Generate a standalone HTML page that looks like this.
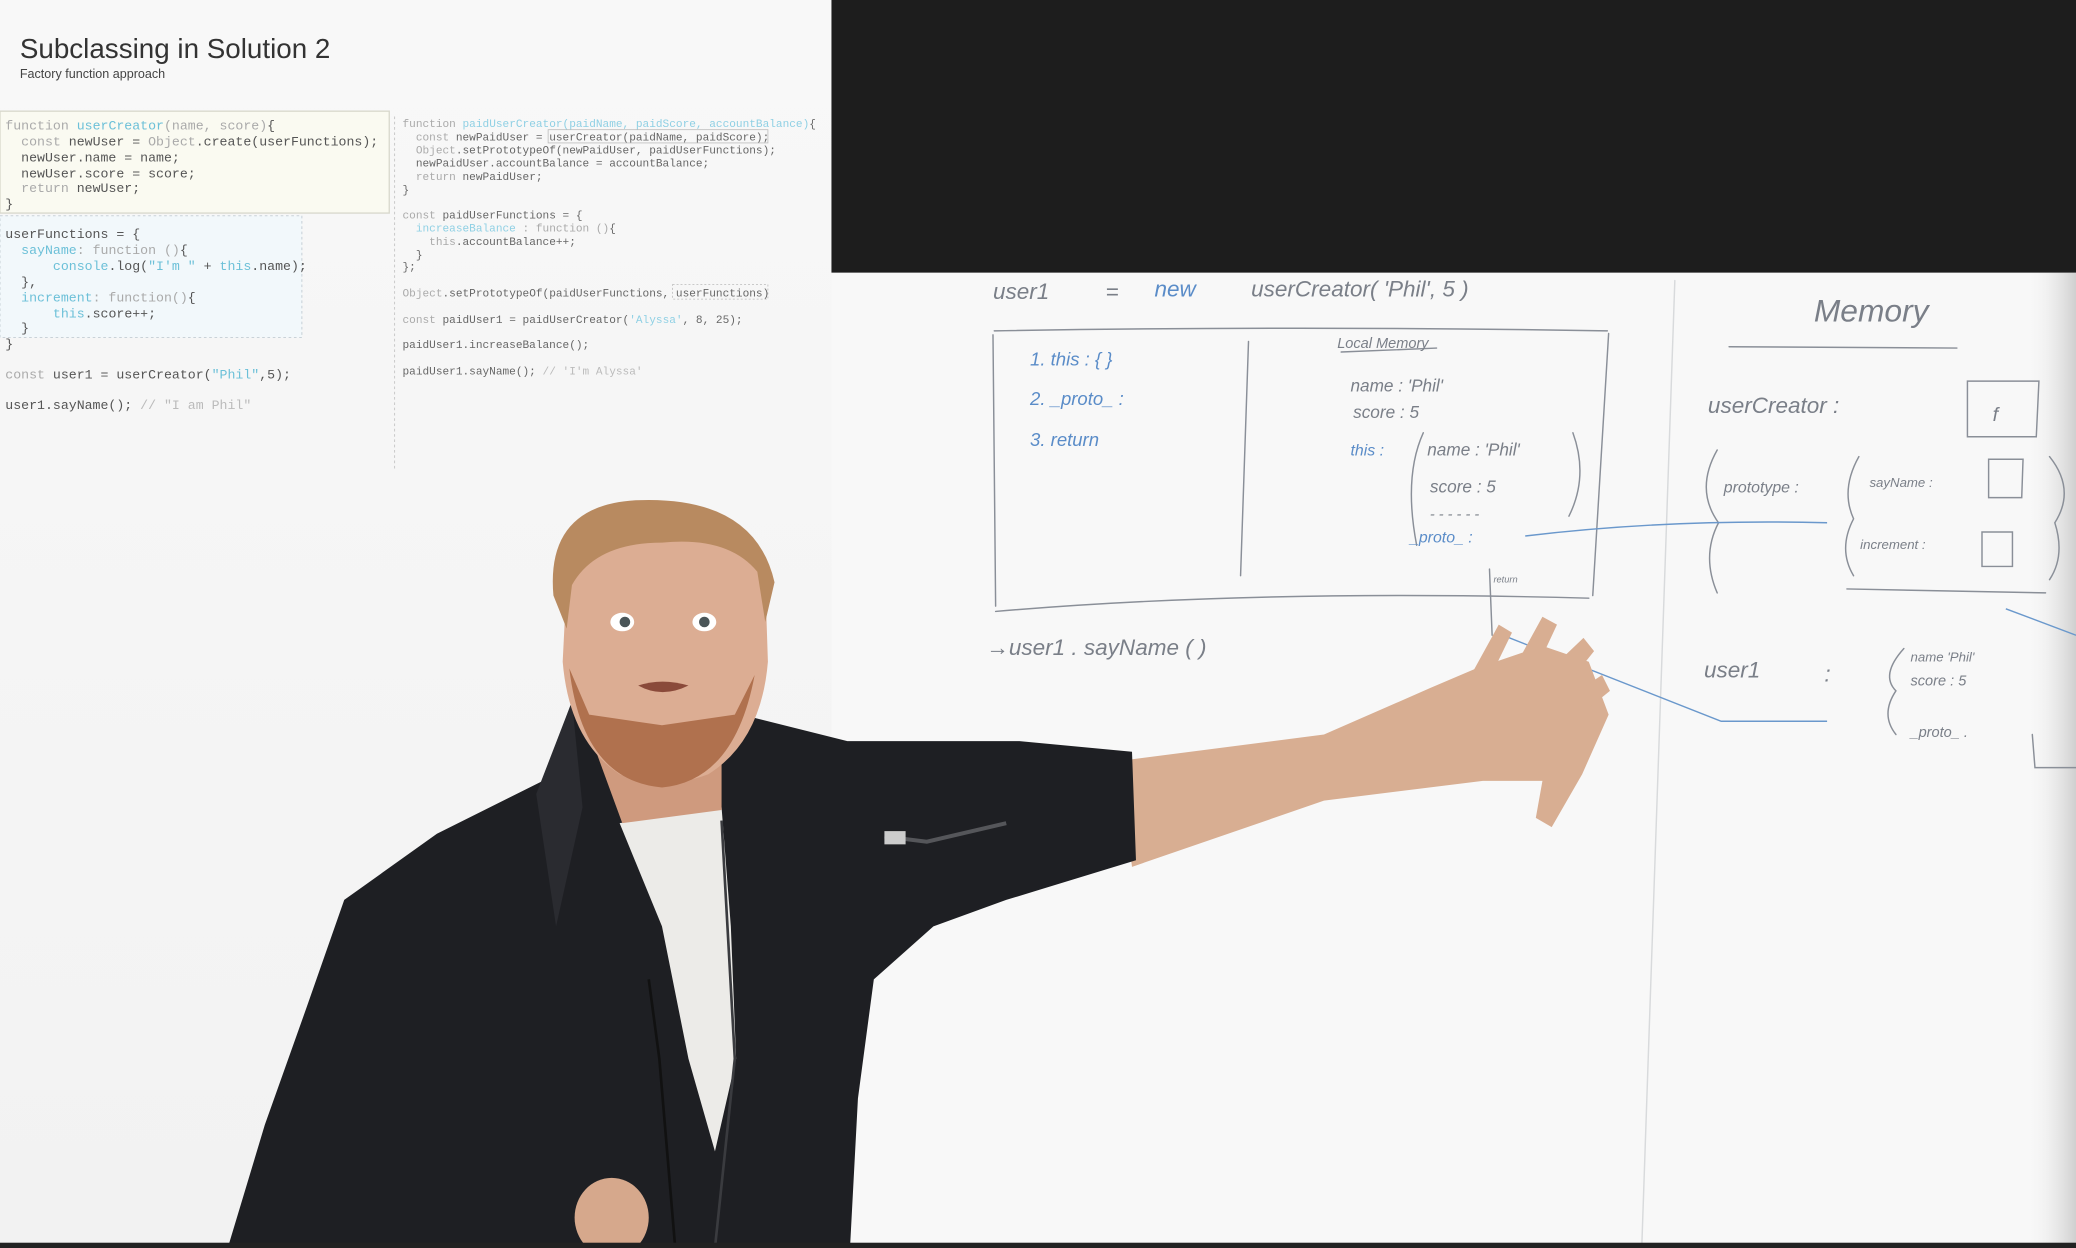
<!DOCTYPE html>
<html><head><meta charset="utf-8">
<style>
html,body{margin:0;padding:0;background:#f5f5f5;}
svg{display:block;}
.t{font-family:"Liberation Sans",sans-serif;}
.m{font-family:"Liberation Mono",monospace;white-space:pre;}
.m text{white-space:pre;}
.h{font-family:"Liberation Sans",sans-serif;font-style:italic;fill:#7a7f88;}
.hb{font-family:"Liberation Sans",sans-serif;font-style:italic;fill:#5a8cc8;}
</style></head>
<body>
<svg width="2076" height="1248" viewBox="0 0 1568 943" preserveAspectRatio="none" xmlns="http://www.w3.org/2000/svg">
<defs>
<linearGradient id="edge" x1="0" x2="1" y1="0" y2="0">
<stop offset="0" stop-color="#f7f7f7" stop-opacity="0"/>
<stop offset="1" stop-color="#cfcfcf"/>
</linearGradient>
<linearGradient id="bg" x1="0" x2="0" y1="0" y2="1">
<stop offset="0" stop-color="#f8f8f8"/>
<stop offset="1" stop-color="#f2f2f2"/>
</linearGradient>
</defs>
<rect width="1568" height="943" fill="url(#bg)"/>
<rect x="628" y="206" width="940" height="737" fill="#f8f8f8"/>
<rect x="1530" y="206" width="38" height="737" fill="url(#edge)"/>
<rect x="628" y="0" width="940" height="206" fill="#1d1d1d"/>

<text x="15" y="44" class="t" font-size="21" fill="#333">Subclassing in Solution 2</text>
<text x="15" y="59" class="t" font-size="9.5" fill="#444">Factory function approach</text>

<rect x="0" y="84" width="294" height="77" fill="#fafaf1" stroke="#d8d8cc" stroke-width="1"/>
<rect x="0" y="163" width="228" height="92" fill="#f2f8fb" stroke="#c9d2d8" stroke-width="0.8" stroke-dasharray="2,2"/>
<line x1="298" y1="88" x2="298" y2="355" stroke="#ccc" stroke-width="0.8" stroke-dasharray="2,2"/>

<g class="m" font-size="10" fill="#555">
<text x="4" y="98"><tspan fill="#aaa">function </tspan><tspan fill="#6cc0d8">userCreator</tspan><tspan fill="#aaa">(name, score)</tspan>{</text>
<text x="4" y="110"><tspan fill="#aaa">  const </tspan>newUser = <tspan fill="#aaa">Object</tspan>.create(userFunctions);</text>
<text x="4" y="122">  newUser.name = name;</text>
<text x="4" y="134">  newUser.score = score;</text>
<text x="4" y="145"><tspan fill="#aaa">  return </tspan>newUser;</text>
<text x="4" y="157">}</text>
<text x="4" y="180">userFunctions = {</text>
<text x="4" y="192"><tspan fill="#6cc0d8">  sayName</tspan><tspan fill="#aaa">: function ()</tspan>{</text>
<text x="4" y="204">      <tspan fill="#6cc0d8">console</tspan>.log(<tspan fill="#6cc0d8">"I'm "</tspan> + <tspan fill="#6cc0d8">this</tspan>.name);</text>
<text x="4" y="216">  },</text>
<text x="4" y="228"><tspan fill="#6cc0d8">  increment</tspan><tspan fill="#aaa">: function()</tspan>{</text>
<text x="4" y="240">      <tspan fill="#6cc0d8">this</tspan>.score++;</text>
<text x="4" y="251">  }</text>
<text x="4" y="263">}</text>
<text x="4" y="286"><tspan fill="#aaa">const </tspan>user1 = userCreator(<tspan fill="#6cc0d8">"Phil"</tspan>,5);</text>
<text x="4" y="309">user1.sayName(); <tspan fill="#bbb">// "I am Phil"</tspan></text>
</g>

<g class="m" font-size="8.4" fill="#666">
<text x="304" y="96"><tspan fill="#aaa">function </tspan><tspan fill="#8fd0e4">paidUserCreator(paidName, paidScore, accountBalance)</tspan>{</text>
<text x="304" y="106"><tspan fill="#aaa">  const </tspan>newPaidUser = userCreator(paidName, paidScore);</text>
<text x="304" y="116"><tspan fill="#aaa">  Object</tspan>.setPrototypeOf(newPaidUser, paidUserFunctions);</text>
<text x="304" y="126">  newPaidUser.accountBalance = accountBalance;</text>
<text x="304" y="136"><tspan fill="#aaa">  return </tspan>newPaidUser;</text>
<text x="304" y="146">}</text>
<text x="304" y="165"><tspan fill="#aaa">const </tspan>paidUserFunctions = {</text>
<text x="304" y="175"><tspan fill="#8fd0e4">  increaseBalance </tspan><tspan fill="#aaa">: function ()</tspan>{</text>
<text x="304" y="185"><tspan fill="#aaa">    this</tspan>.accountBalance++;</text>
<text x="304" y="195">  }</text>
<text x="304" y="204">};</text>
<text x="304" y="224"><tspan fill="#aaa">Object</tspan>.setPrototypeOf(paidUserFunctions, userFunctions)</text>
<text x="304" y="244"><tspan fill="#aaa">const </tspan>paidUser1 = paidUserCreator(<tspan fill="#8fd0e4">'Alyssa'</tspan>, 8, 25);</text>
<text x="304" y="263">paidUser1.increaseBalance();</text>
<text x="304" y="283">paidUser1.sayName(); <tspan fill="#bbb">// 'I'm Alyssa'</tspan></text>
</g>
<rect x="414" y="98" width="166" height="10" fill="none" stroke="#bbb" stroke-width="0.6"/>
<rect x="508" y="215" width="72" height="11" fill="none" stroke="#bbb" stroke-width="0.6" stroke-dasharray="1.5,1.5"/>

<g fill="none" stroke="#8a8f98" stroke-width="1.1" stroke-linecap="round">
<path d="M751 250 Q980 246 1214 250"/>
<path d="M750 253 L752 458"/>
<path d="M752 462 Q950 445 1200 452"/>
<path d="M1215 252 L1203 450"/>
<path d="M943 258 L937 435"/>
<path d="M1265 212 L1240 943" stroke="#d8dadc"/>
<path d="M1013 266 L1085 263"/>
<path d="M1306 262 L1478 263"/>
<path d="M1395 445 L1545 448"/>
<path d="M1486 288 L1540 288 L1538 330 L1486 330 Z"/>
<path d="M1502 347 L1528 347 L1527 376 L1502 376 Z"/>
<path d="M1497 402 L1520 402 L1520 428 L1497 428 Z"/>
<path d="M1125 430 L1127 480"/>
<path d="M1297 340 Q1280 370 1298 395 Q1285 420 1297 448"/>
<path d="M1404 345 Q1390 370 1400 392 Q1388 415 1400 435"/>
<path d="M1548 345 Q1568 370 1552 395 Q1560 420 1548 438"/>
<path d="M1438 490 Q1420 510 1432 522 Q1420 540 1432 555"/>
<path d="M1535 555 L1537 580 L1568 580"/>
<path d="M1188 327 Q1200 360 1185 390"/>
<path d="M1075 327 Q1060 360 1070 412"/>
</g>
<g fill="none" stroke="#6a98cc" stroke-width="1.1">
<path d="M1152 405 Q1260 392 1380 395"/>
<path d="M1130 478 L1300 545 L1380 545"/>
<path d="M1515 460 L1568 480"/>
</g>
<g font-size="17">
<text x="750" y="226" class="h">user1</text>
<text x="835" y="226" class="h">=</text>
<text x="872" y="224" class="hb">new</text>
<text x="945" y="224" class="h">userCreator( 'Phil', 5 )</text>
<text x="1370" y="243" class="h" font-size="24">Memory</text>
<text x="745" y="495" class="h">→user1 . sayName ( )</text>
<text x="1290" y="312" class="h">userCreator   :</text>
<text x="1302" y="372" class="h" font-size="12">prototype :</text>
<text x="1412" y="368" class="h" font-size="10">sayName :</text>
<text x="1405" y="415" class="h" font-size="10">increment :</text>
<text x="1505" y="318" class="h" font-size="15">f</text>
<text x="1287" y="512" class="h">user1</text>
<text x="1378" y="515" class="h">:</text>
<text x="1443" y="500" class="h" font-size="10">name  'Phil'</text>
<text x="1443" y="518" class="h" font-size="11">score :  5</text>
<text x="1443" y="557" class="h" font-size="11">_proto_ .</text>
</g>
<g font-size="14">
<text x="778" y="276" class="hb">1. this : { }</text>
<text x="778" y="306" class="hb">2. _proto_ :</text>
<text x="778" y="337" class="hb">3. return</text>
<text x="1010" y="263" class="h" font-size="11">Local   Memory</text>
<text x="1020" y="296" class="h" font-size="13">name : 'Phil'</text>
<text x="1022" y="316" class="h" font-size="13">score : 5</text>
<text x="1020" y="344" class="hb" font-size="12">this :</text>
<text x="1078" y="344" class="h" font-size="13">name : 'Phil'</text>
<text x="1080" y="372" class="h" font-size="13">score : 5</text>
<text x="1080" y="392" class="h" font-size="11">- - - - - -</text>
<text x="1065" y="410" class="hb" font-size="12">_proto_ :</text>
<text x="1128" y="440" class="h" font-size="7">return</text>
</g>

<path d="M845 575 L1000 555 L1080 520 L1115 505 L1165 488 L1200 500 L1215 540 L1195 585 L1172 625 L1160 618 L1165 590 L1120 590 L1000 605 L855 655 Z" fill="#d8ae92"/>
<path d="M1110 512 L1132 472 L1142 478 L1124 515 Z M1148 497 L1165 466 L1176 472 L1162 502 Z M1175 502 L1196 482 L1204 492 L1188 512 Z M1192 522 L1210 510 L1216 522 L1200 535 Z" fill="#d8ae92"/>
<path d="M432 530 L410 590 L330 630 L260 680 L232 760 L200 850 L172 943 L642 943 L648 830 L660 740 L705 700 L760 680 L858 650 L855 568 L770 560 L640 560 L560 540 L545 560 L470 560 Z" fill="#1e1f23"/>
<path d="M432 530 L405 600 L420 700 L440 610 Z" fill="#2a2b30"/>
<path d="M468 622 L545 610 L552 700 L556 800 L540 870 L520 800 L500 700 Z" fill="#ecebe8"/>
<path d="M545 620 L555 800 L540 943" fill="none" stroke="#3a3b3f" stroke-width="2"/>
<path d="M668 632 L700 636 L760 622" fill="none" stroke="#55565a" stroke-width="3"/>
<rect x="668" y="628" width="16" height="10" fill="#ccc"/>
<path d="M440 540 L545 545 L545 612 L470 622 Z" fill="#cf9a7e"/>
<path d="M428 440 Q428 395 500 390 Q575 392 578 440 L580 500 Q575 560 535 585 Q500 598 468 585 Q430 560 425 500 Z" fill="#dcad93"/>
<path d="M430 505 Q440 590 500 595 Q555 590 570 510 L555 540 L500 548 L445 540 Z" fill="#b0714e"/>
<path d="M418 450 Q412 382 480 378 Q570 374 585 440 L578 470 L572 432 Q550 405 500 410 Q450 410 432 442 L428 475 Z" fill="#b88a60"/>
<ellipse cx="470" cy="470" rx="9" ry="7" fill="#fff"/>
<ellipse cx="532" cy="470" rx="9" ry="7" fill="#fff"/>
<circle cx="472" cy="470" r="4" fill="#4a5558"/>
<circle cx="532" cy="470" r="4" fill="#4a5558"/>
<path d="M482 518 Q500 512 520 518 Q500 528 482 518 Z" fill="#8a4a3a"/>
<path d="M490 740 L498 800 L510 943" fill="none" stroke="#111" stroke-width="2"/>
<ellipse cx="462" cy="920" rx="28" ry="30" fill="#d6a88c"/>

<rect x="0" y="939" width="1568" height="4" fill="#222"/>
</svg>
</body></html>
